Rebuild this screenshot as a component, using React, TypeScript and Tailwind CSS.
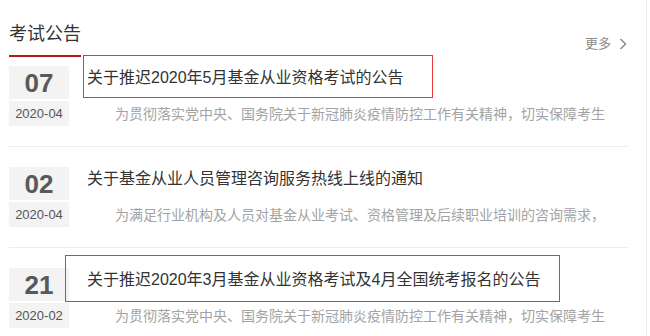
import React from "react";

interface Notice {
  day: string;
  month: string;
  title: string;
  desc: string;
}

const notices: Notice[] = [
  {
    day: "07",
    month: "2020-04",
    title: "关于推迟2020年5月基金从业资格考试的公告",
    desc: "为贯彻落实党中央、国务院关于新冠肺炎疫情防控工作有关精神，切实保障考生",
  },
  {
    day: "02",
    month: "2020-04",
    title: "关于基金从业人员管理咨询服务热线上线的通知",
    desc: "为满足行业机构及人员对基金从业考试、资格管理及后续职业培训的咨询需求，",
  },
  {
    day: "21",
    month: "2020-02",
    title: "关于推迟2020年3月基金从业资格考试及4月全国统考报名的公告",
    desc: "为贯彻落实党中央、国务院关于新冠肺炎疫情防控工作有关精神，切实保障考生",
  },
];

const NoticeRow: React.FC<{ item: Notice; first: boolean }> = ({ item, first }) => (
  <div className={`flex border-b border-[#ececec] pb-[20px] ${first ? "pt-[9px]" : "pt-[20px]"}`}>
    <div className="w-[60px] shrink-0 flex flex-col gap-[2px]">
      <div className="h-[33px] bg-[#f3f3f3] flex items-center justify-center text-[26px] font-bold leading-none text-[#595959]">
        {item.day}
      </div>
      <div className="h-[25px] bg-[#f3f3f3] flex items-center justify-center text-[13px] leading-none text-[#555]">
        {item.month}
      </div>
    </div>
    <div className="ml-[18px] flex-1 min-w-0">
      <div className="text-[16px] leading-[24px] text-[#333] whitespace-nowrap">{item.title}</div>
      <div className="mt-[12px] text-[14px] leading-[24px] text-[#a3a3a3] indent-[28px] whitespace-nowrap overflow-hidden">
        {item.desc}
      </div>
    </div>
  </div>
);

export default function App() {
  return (
    <div
      className="relative w-[647px] h-[336px] overflow-hidden bg-white border-r border-[#efefef]"
      style={{ fontFamily: '"Liberation Sans", "Noto Sans CJK SC", sans-serif' }}
    >
      <div className="ml-[9px] w-[619px]">
        <div className="flex items-start justify-between pt-[22px]">
          <div className="text-[18px] leading-[24px] text-[#333] pb-[9px] border-b-2 border-[#b8161d]">考试公告</div>
          <a className="mt-[12px] flex items-center gap-[8px] text-[13px] leading-[20px] text-[#8c8c8c] pr-[1px]">
            <span>更多</span>
            <svg width="8" height="12" viewBox="0 0 8 12" fill="none">
              <path d="M1.5 1 L6.5 6 L1.5 11" stroke="#8c8c8c" strokeWidth="1.5" />
            </svg>
          </a>
        </div>
        {notices.map((n, i) => (
          <NoticeRow key={i} item={n} first={i === 0} />
        ))}
      </div>

      {/* highlight frames drawn over the titles */}
      <div className="absolute left-[83px] top-[55px] w-[350px] h-[43px] border border-[#e3393c] pointer-events-none" />
      <div className="absolute left-[65px] top-[255px] w-[495px] h-[47px] border border-[#e3393c] pointer-events-none" />
    </div>
  );
}
